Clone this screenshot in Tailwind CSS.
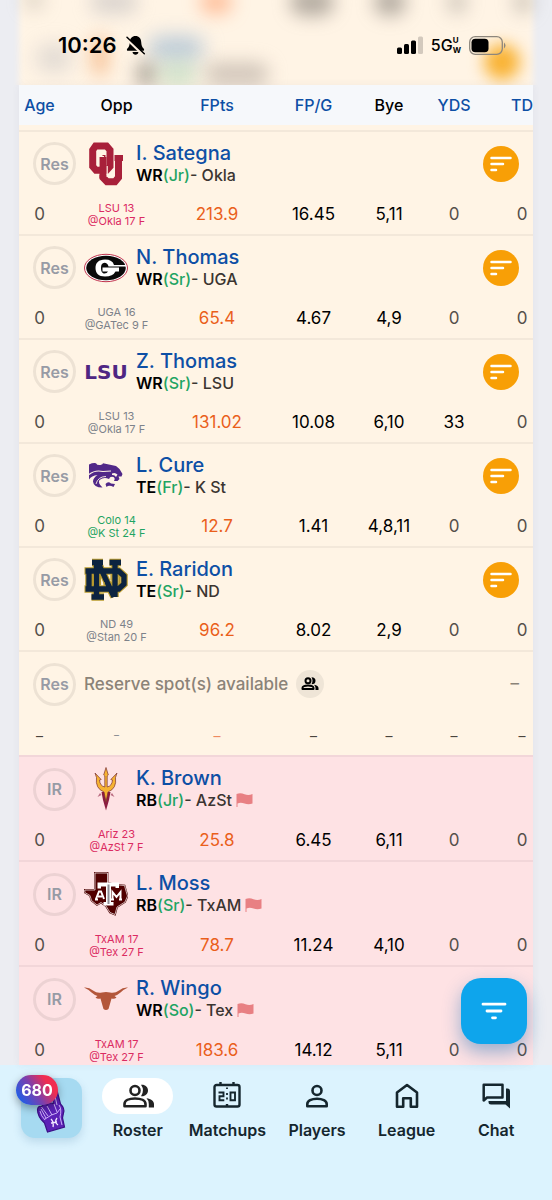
<!DOCTYPE html>
<html lang="en">
<head>
<meta charset="utf-8">
<meta name="viewport" content="width=device-width, initial-scale=1">
<title>Roster</title>
<script src="https://cdn.jsdelivr.net/npm/@tailwindcss/browser@4"></script>
</head>
<body class="bg-[#ecedf2] font-['Inter','Liberation_Sans',sans-serif] text-black">
<div class="flex h-dvh flex-col overflow-hidden">

  <!-- Device status bar over blurred content -->
  <header class="relative h-[85px] shrink-0 overflow-hidden">
    <div class="absolute inset-x-[19px] -inset-y-4 bg-[#fff4e5] blur-[3px]"></div>
    <div class="absolute left-[24px] -top-[10px] h-5 w-5 rounded-full bg-[#a89f94]/40 blur-[9px]"></div>
    <div class="absolute left-[90px] -top-[10px] h-6 w-12 rounded-full bg-[#a8a8b0]/40 blur-[9px]"></div>
    <div class="absolute left-[200px] -top-[10px] h-6 w-8 rounded-full bg-[#ff8a50]/50 blur-[9px]"></div>
    <div class="absolute left-[290px] -top-[12px] h-7 w-11 rounded-full bg-[#6b6660]/50 blur-[9px]"></div>
    <div class="absolute left-[374px] -top-[12px] h-7 w-8 rounded-full bg-[#6b6660]/50 blur-[9px]"></div>
    <div class="absolute left-[447px] -top-[10px] h-6 w-5 rounded-full bg-[#8b8680]/40 blur-[9px]"></div>
    <div class="absolute left-[513px] -top-[10px] h-6 w-5 rounded-full bg-[#8b8680]/40 blur-[9px]"></div>
    <div class="absolute left-[36px] top-[44px] h-7 w-9 rounded-full bg-[#b5b5b8]/40 blur-[10px]"></div>
    <div class="absolute left-[92px] top-[36px] h-10 w-4 rounded-full bg-[#f0a060]/60 blur-[9px]"></div>
    <div class="absolute left-[148px] top-[36px] h-6 w-14 rounded-full bg-[#8fb0d0]/60 blur-[10px]"></div>
    <div class="absolute left-[136px] top-[62px] h-6 w-5 rounded-full bg-[#706a62]/60 blur-[9px]"></div>
    <div class="absolute left-[158px] top-[62px] h-6 w-10 rounded-full bg-[#9ed0ae]/50 blur-[10px]"></div>
    <div class="absolute left-[205px] top-[62px] h-6 w-16 rounded-full bg-[#b5aaa0]/60 blur-[9px]"></div>
    <div class="absolute left-[484px] top-[44px] h-9 w-9 rounded-full bg-[#f9b233] blur-[8px]"></div>
    <div class="relative flex h-[90px] items-center pr-[45px] pl-[58px]">
      <span class="text-[22px] leading-6 font-semibold">10:26</span>
      <svg class="ml-2 h-[21px] w-[21px]" viewBox="0 0 21 21" aria-label="Silent mode">
        <path d="M10.500 1C14 1 16 3.500 16.200 7C16.400 10.500 17 12 18.800 13.700C19.500 14.600 19 15.800 18 15.800H3C2 15.800 1.500 14.600 2.200 13.700C4 12 4.600 10.500 4.800 7C5 3.500 7 1 10.500 1ZM7.500 17H13.500C13.200 18.800 12 19.800 10.500 19.800C9 19.800 7.800 18.800 7.500 17Z"/>
        <path d="M1.500 3.500L18.500 20" stroke="#fdf0e0" stroke-width="2.800"/>
        <path d="M2 2.200L19.300 18.800" stroke="#000" stroke-width="1.500" stroke-linecap="round"/>
      </svg>
      <svg class="ml-auto h-[18px] w-[26px]" viewBox="0 0 26 18" aria-label="Signal">
        <rect x="0" y="11.500" width="5" height="6.500" rx="1.500"/><rect x="7" y="8" width="5" height="10" rx="1.500"/><rect x="14" y="4.500" width="5" height="13.500" rx="1.500"/><rect x="21" y="0.500" width="5" height="17.500" rx="1.500" fill="#d3c9bd"/>
      </svg>
      <span class="ml-2 text-[16px] leading-5 font-medium">5G</span>
      <span class="flex flex-col text-[8px] leading-[10px] font-bold"><span>U</span><span>W</span></span>
      <svg class="ml-2 h-[19px] w-[38px]" viewBox="0 0 38 19" aria-label="Battery">
        <rect x="0.700" y="0.700" width="32.600" height="17.600" rx="5.500" fill="none" stroke="#8d867c" stroke-width="1.300"/><rect x="2.500" y="2.700" width="17" height="13.600" rx="3.800"/><path d="M35 6.500Q38 9.500 35 12.500Z" fill="#8d867c"/>
      </svg>
    </div>
  </header>

  <main class="relative min-h-0 flex-1">
    <div class="mx-[19px] h-full overflow-x-hidden overflow-y-auto bg-[#fff4e5] shadow-[0_0_8px_rgba(60,60,100,0.06)] [scrollbar-width:none]">
      <table class="w-[calc(100%+15px)] table-fixed border-separate border-spacing-0 text-center">
        <colgroup>
          <col class="w-[41px]"><col class="w-[113px]"><col class="w-[88px]"><col class="w-[105px]"><col class="w-[46px]"><col class="w-[84px]"><col class="w-[52px]">
        </colgroup>
        <thead class="text-[16px] font-medium text-[#0d4fa5]">
          <tr>
            <th class="h-[45px] border-b-5 border-[#fff4e5] bg-[#f6f8fb] p-0 font-medium" scope="col">Age</th>
            <th class="border-b-5 border-[#fff4e5] bg-[#f6f8fb] p-0 font-medium text-black" scope="col">Opp</th>
            <th class="border-b-5 border-[#fff4e5] bg-[#f6f8fb] p-0 font-medium" scope="col">FPts</th>
            <th class="border-b-5 border-[#fff4e5] bg-[#f6f8fb] p-0 font-medium" scope="col">FP/G</th>
            <th class="border-b-5 border-[#fff4e5] bg-[#f6f8fb] p-0 font-medium text-black" scope="col">Bye</th>
            <th class="border-b-5 border-[#fff4e5] bg-[#f6f8fb] p-0 font-medium" scope="col">YDS</th>
            <th class="border-b-5 border-[#fff4e5] bg-[#f6f8fb] p-0 font-medium" scope="col">TD</th>
          </tr>
        </thead>
        <tbody id="roster" class="text-[17px]"></tbody>
      </table>
    </div>
    <button type="button" aria-label="Filter" class="absolute right-[25px] bottom-[21px] flex h-[66px] w-[66px] items-center justify-center rounded-[20px] bg-[#0ea5ec] shadow-[0_8px_18px_rgba(30,110,180,0.45)]">
      <svg class="h-[18px] w-[26px]" viewBox="0 0 26 18" fill="none" stroke="#fff" stroke-width="2.800" stroke-linecap="round"><path d="M2 2.200H24M6 9H20M11.500 15.800H14.500"/></svg>
    </button>
  </main>

  <nav class="flex shrink-0 items-start gap-[11px] bg-[#dcf3fe] pt-[13px] pr-[11px] pb-[60px] pl-[21px]" aria-label="Main">
    <a href="#" aria-label="Game, 680 points" class="relative mb-[1px] block h-[60px] w-[61px] shrink-0 rounded-[14px] bg-[#a6daf1] shadow-[0_4px_8px_rgba(60,120,160,0.2)]">
      <svg class="h-full w-full" viewBox="0 0 61 60">
        <g transform="translate(2 2)">
          <path d="M29 12L34 10.500L37.500 24C40.500 27 41.500 30 40.500 33L39.500 38L41.500 47L24.500 52L21.500 43C17 39 14.500 35 14.500 29.500C15 26 17 26 18.500 26.500C19.500 24 22.500 23.500 24 25C25.500 22.500 28 22.500 30.500 24Z" fill="#5b21b6" stroke="#3b0f86" stroke-width="1.200"/>
          <path d="M18 29L23 38M18.500 27L25 36M24 26L29 35M31 24L34 32M22 39Q29 34 34 33L37 29M17 31Q18 36 22 40M36 25Q39 29 37 37L39 45M31.500 14L34 25" fill="none" stroke="#d9c2ff" stroke-width=".9"/>
          <path d="M28 39Q31 42 30 47M34 38Q31 42 35 45M28 43L34 42" fill="none" stroke="#f2e8ff" stroke-width="1.300"/>
        </g>
      </svg>
      <span class="absolute -top-[3px] -left-[5px] flex h-[30px] w-[42px] items-center justify-center rounded-full bg-linear-[55deg,#2b5be0_15%,#7b3fae_45%,#f02d50_75%] text-[16px] leading-none font-bold text-white shadow-[0_3px_8px_rgba(0,0,0,0.35)]">680</span>
    </a>
    <div class="grid flex-1 grid-cols-5 text-center text-[16px] leading-5 font-semibold text-[#15262e]">
      <a href="#" aria-current="page" class="flex flex-col items-center gap-1.5">
        <span class="flex h-9 w-[71px] items-center justify-center rounded-full bg-white">
          <svg class="h-8 w-9" viewBox="0 0 36 32" fill="none" stroke="#222" stroke-width="2.600"><circle cx="15" cy="10.500" r="4.500"/><path d="M4.500 26.200V24C4.500 20.500 9 18.500 15 18.500S25.500 20.500 25.500 24V26.200Z" stroke-linejoin="round"/><path d="M21 4.800C25 4.300 28 7 28 10.500S25 16.700 21 16.200Q25 10.500 21 4.800ZM26.500 18.300C31 19 34 21 34 24V27.500H28.800V24Q28.800 20.500 26.500 18.300Z" fill="#222" stroke="none"/></svg>
        </span>Roster</a>
      <a href="#" class="flex flex-col items-center gap-1.5">
        <span class="flex h-9 items-center justify-center">
          <svg class="h-8 w-9" viewBox="0 0 36 32" fill="none" stroke="#15262e" stroke-width="2.400"><rect x="5.500" y="5" width="25" height="21.500" rx="2"/><path d="M11.500 2V6M24.500 2V6M18 24V27"/><path d="M9.500 12.500H14.500V16.300H10.500V20.200H15.300M21.500 12.500H26V20.200H21.500Z" stroke-width="1.900"/><path d="M18 7.500V9M18 13V15M18 17.500V19.500" stroke-width="1.800"/></svg>
        </span>Matchups</a>
      <a href="#" class="flex flex-col items-center gap-1.5">
        <span class="flex h-9 items-center justify-center">
          <svg class="h-8 w-9" viewBox="0 0 36 32" fill="none" stroke="#15262e" stroke-width="2.600"><circle cx="18" cy="10.500" r="4.500"/><path d="M8.300 26.200V24C8.300 20.800 12.500 18.800 18 18.800S27.700 20.800 27.700 24V26.200Z" stroke-linejoin="round"/></svg>
        </span>Players</a>
      <a href="#" class="flex flex-col items-center gap-1.5">
        <span class="flex h-9 items-center justify-center">
          <svg class="h-8 w-9" viewBox="0 0 36 32" fill="none" stroke="#15262e" stroke-width="2.600" stroke-linejoin="round"><path d="M8 26.700V12.500L18 5L28 12.500V26.700H21.800V18.200H14.200V26.700Z"/></svg>
        </span>League</a>
      <a href="#" class="flex flex-col items-center gap-1.5">
        <span class="flex h-9 items-center justify-center">
          <svg class="h-8 w-9" viewBox="0 0 36 32" fill="none" stroke="#15262e" stroke-width="2.500" stroke-linejoin="round"><path d="M5.700 20.500V4.800H24.500V17.500H9Z"/><path d="M28 8.500H29.500Q32 8.500 32 11V28.500L27.500 24.500H13Q10.500 24.500 10.500 22V21H28Z" fill="#15262e" stroke="none"/></svg>
        </span>Chat</a>
    </div>
  </nav>
</div>

<script>
const logos = {
  Okla: `<path d="M19 14V35.500L23 39.700H31L34.500 35.500V15" fill="none" stroke="#a8203a" stroke-width="7"/><path d="M30 13H39V19H30ZM18.500 13H23V20H18.500Z" fill="#a8203a"/><path d="M11.500 4H22.500L26 8V24.500L22.500 28.300H12L8.700 24.500V8Z" fill="none" stroke="#fff4e5" stroke-width="9"/><path d="M11.500 4H22.500L26 8V24.500L22.500 28.300H12L8.700 24.500V8Z" fill="none" stroke="#a8203a" stroke-width="7"/><path d="M15.500 15V36L19 39L22.500 36V15Z" fill="#a8203a"/><path d="M14.800 24V14.500H20M23.200 24V35" fill="none" stroke="#fff4e5" stroke-width="1.200"/>`,
  UGA: `<ellipse cx="22" cy="22" rx="21.500" ry="13.700" fill="#fff" stroke="#c2334d" stroke-width="1"/><ellipse cx="22" cy="22" rx="19.800" ry="12.200" fill="#0a0a0a"/><path d="M42 19H30Q28.500 13.500 21 13.500C14.500 13.500 11.500 17 11.500 22S14.500 30.500 21 30.500Q29 30.500 31.500 25.500H35V21.500H18.500V25.500H24Q23 27.500 20.500 27.500C18 27.500 17 25 17 22S18 16.800 20.500 16.800Q23.500 16.800 24.500 20.500H42Z" fill="#fff"/>`,
  LSU: `<text x="22" y="29" text-anchor="middle" font-family="DejaVu Sans" font-weight="700" font-size="20" fill="#4f2683">LSU</text>`,
  KSt: `<path d="M5 10.500Q9 8.500 12 9.200Q13 11.500 16.500 11Q19 10.500 19 9.200L32 12L35.500 15L38.500 20L37.500 22.500H34.500L35.500 25L33.500 27H30Q31.500 24 29.500 23Q26 22 25 25Q20 22.500 15.500 26Q13.500 29 18.500 33.500Q9.500 33.500 9 27.500Q9 24 13.500 21Q7.500 21.500 5 25.500Z" fill="#512888"/><path d="M5 20.500Q11 15.500 19 17.500L27 17" fill="none" stroke="#fff4e5" stroke-width="1.100"/><path d="M28 19.500Q31 18 33.500 20.500L32 23Q30.500 20.500 28 21Z" fill="#fff4e5"/><path d="M12 30Q14 22.500 22 22.500" fill="none" stroke="#fff4e5" stroke-width=".9"/><path d="M21.500 30Q24 27 27 29.500L31 30L29.500 33Q25 30.500 22.500 33Z" fill="#512888"/>`,
  ND: `<g fill="none"><path d="M8 4.500H19M12.500 4.500V39M7.500 39H20M14 4.500L30 39M25.500 4.500H37M31 4.500V39M0.500 13H34.500L40 18V26L34.500 31H0.500M5 13V31" stroke="#b99a2d" stroke-width="7.500"/><path d="M8 4.500H19M12.500 4.500V39M7.500 39H20M14 4.500L30 39M25.500 4.500H37M31 4.500V39M1.500 13H34.500L40 18V26L34.500 31H1.500M5 13V31" stroke="#0c2340" stroke-width="5.300"/><path d="M9.200 17V27M16.500 18V27M20 24V28M27 17V22M35.500 18.500V26" stroke="#b99a2d" stroke-width="1.200"/></g>`,
  AzSt: `<path d="M17.500 25H26.500L25 33L22 43.500L19 33Z" fill="#8c1d40"/><path d="M16 26L13.500 30L17.500 28ZM28 26L30.500 30L26.500 28Z" fill="#8c1d40" opacity=".6"/><path d="M22 0.500L24.300 8L23.200 9V20Q28 19 28.500 13L26.800 12.500L33 6L31.500 10.500Q33 21.500 24 25L22 35L20 25Q11 21.500 12.500 10.500L11 6L17.200 12.500L15.500 13Q16 19 20.800 20V9L19.700 8Z" fill="#f6b332" stroke="#7a3030" stroke-width=".7"/>`,
  TxAM: `<path d="M11 1H23.500V11L30 12.500L40.500 13.500L42 19L43.500 24L41 30L33 35L31 42.500L26 40.500L22 34L17 30.500L13 33L7.500 28.500L6 23.500L0.800 20.500V18H11Z" fill="#500000" stroke="#500000" stroke-width="1.800"/><path d="M11 1H23.500V11L30 12.500L40.500 13.500L42 19L43.500 24L41 30L33 35L31 42.500L26 40.500L22 34L17 30.500L13 33L7.500 28.500L6 23.500L0.800 20.500V18H11Z" fill="#500000" stroke="#fff" stroke-width=".7"/><path d="M12 27L15 19.500H17L20 27M14 24.500H18M11 27.500H14M28.500 27V20L32.500 25L36.500 20V27M27 27.500H30M35 27.500H38" fill="none" stroke="#fff" stroke-width="2"/><path d="M13.500 10.500H35V16H31.500V14.500H27V30H29.500V33.500H19.500V30H22V14.500H17V16.500H13.500Z" fill="#fff"/><path d="M24.500 12.500V32" stroke="#8d8d94" stroke-width="2"/>`,
  Tex: `<path d="M0 10.500Q5 10 9 13.500Q13 16.500 18 15.500Q22 14.500 26 15.500Q31 16.500 35 13.500Q39 10 44 10.500Q39.500 12.500 36.500 15.500Q33 18.500 30.500 19L32.500 20.500Q30.500 22.500 27.500 21.500Q26 27 24.500 32Q22 34 19.500 32Q18 27 16.500 21.500Q13.500 22.500 11.500 20.500L13.500 19Q11 18.500 7.500 15.500Q4.500 12.500 0 10.500Z" fill="#b3563a"/>`
};
const rows = [
  ['Res','Okla','I. Sategna','WR','Jr','Okla','LSU 13','@Okla 17 F','loss','213.9','16.45','5,11','0'],
  ['Res','UGA','N. Thomas','WR','Sr','UGA','UGA 16','@GATec 9 F','none','65.4','4.67','4,9','0'],
  ['Res','LSU','Z. Thomas','WR','Sr','LSU','LSU 13','@Okla 17 F','none','131.02','10.08','6,10','33'],
  ['Res','KSt','L. Cure','TE','Fr','K St','Colo 14','@K St 24 F','win','12.7','1.41','4,8,11','0'],
  ['Res','ND','E. Raridon','TE','Sr','ND','ND 49','@Stan 20 F','none','96.2','8.02','2,9','0'],
  null,
  ['IR','AzSt','K. Brown','RB','Jr','AzSt','Ariz 23','@AzSt 7 F','loss','25.8','6.45','6,11','0'],
  ['IR','TxAM','L. Moss','RB','Sr','TxAM','TxAM 17','@Tex 27 F','loss','78.7','11.24','4,10','0'],
  ['IR','Tex','R. Wingo','WR','So','Tex','TxAM 17','@Tex 27 F','loss','183.6','14.12','5,11','0']
];
const tone = { loss: 'text-[#db2b62]', win: 'text-[#1fa463]', none: 'text-[#7d828a]' };
const slot = s => `<button type="button" class="h-[43px] w-[43px] shrink-0 rounded-full border-[3px] border-black/7 text-[16px] leading-none font-semibold text-[#979ba5]">${s}</button>`;
const flag = `<svg class="ml-1 h-[14px] w-[17px]" viewBox="0 0 17 14" aria-label="Injured"><path d="M.5 1Q4.500 -.5 8.500 1.200T16.500 1V10.500Q12.500 12 8.500 10.500T1.500 10.500V14H.5Z" fill="#e88083"/></svg>`;
const menu = `<button type="button" aria-label="Player actions" class="mr-[29px] ml-auto flex h-9 w-9 items-center justify-center rounded-full bg-[#f89f06]"><svg class="h-4 w-[22px]" viewBox="0 0 22 16" fill="none" stroke="#fff" stroke-width="2.500" stroke-linecap="round"><path d="M1.500 2H20.500M1.500 8H13M1.500 14H6"/></svg></button>`;
document.getElementById('roster').innerHTML = rows.map(r => {
  if (!r) return `<tr><td colspan="7" class="h-[66px] border-t-2 border-[#f3e8da] p-0"><div class="flex items-center gap-2 pl-[14px]">${slot('Res')}
    <span class="text-[17px] leading-6 font-medium text-[#8b8378]">Reserve spot(s) available</span>
    <button type="button" aria-label="Find players" class="flex h-7 w-7 items-center justify-center rounded-full bg-[#efe5d7]"><svg class="h-4 w-[18px]" viewBox="0 0 18 16" fill="none" stroke="#000" stroke-width="2"><circle cx="7" cy="4.700" r="2.500"/><path d="M1.500 13V12Q1.500 9.500 7 9.500T12.500 12V13Z" stroke-linejoin="round"/><path d="M10.500 1.200Q14.500 1.200 14.500 4.700T10.500 8.200Q12.500 4.700 10.500 1.200ZM13 8.800Q17.500 9.800 17.500 12V14H14.500V12Q14.500 10 13 8.800Z" fill="#000" stroke="none"/></svg></button>
    <span class="mr-[29px] ml-auto text-[#8b8378]">–</span></div></td></tr>
    <tr class="h-[39px] text-[14px] text-[#4a443d]"><td class="p-0">–</td><td class="p-0 text-[10px] text-[#7d828a]">–</td><td class="p-0 text-[#ee8a60]">–</td><td class="p-0">–</td><td class="p-0">–</td><td class="p-0">–</td><td class="p-0">–</td></tr>`;
  const [s, logo, name, pos, yr, team, g1, g2, t, fpts, fpg, bye, yds] = r;
  const ir = s === 'IR';
  return `<tr class="${ir ? 'bg-[#fee2e4]' : ''}"><td colspan="7" class="${ir ? 'h-[66px] border-[#f2d6d9]' : 'h-[65px] border-[#f3e8da]'} border-t-2 p-0"><div class="flex items-center gap-2 pl-[14px] text-left">${slot(s)}
    <svg class="h-11 w-11 shrink-0" viewBox="0 0 44 44" aria-label="${team} logo">${logos[logo]}</svg>
    <div><a href="#" class="block text-[20px] leading-[22px] font-medium text-[#0d4fa5]">${name}</a>
    <div class="flex items-center text-[16px] leading-[22px] font-medium text-[#3b3531]"><span class="font-semibold text-black">${pos}</span><span class="text-[#1fa463]">(${yr})</span><span>- ${team}</span>${ir ? flag : ''}</div></div>
    ${ir ? '' : menu}</div></td></tr>
    <tr class="h-[39px] ${ir ? 'bg-[#fee2e4]' : ''}"><td class="p-0 text-[#55504b]">0</td><td class="p-0 text-[11px] leading-[13px] ${tone[t]}">${g1}<br>${g2}</td><td class="p-0 text-[#ea5f1b]">${fpts}</td><td class="p-0">${fpg}</td><td class="p-0">${bye}</td><td class="p-0 ${yds === '0' ? 'text-[#55504b]' : ''}">${yds}</td><td class="p-0 text-[#55504b]">0</td></tr>`;
}).join('');
</script>
</body>
</html>
